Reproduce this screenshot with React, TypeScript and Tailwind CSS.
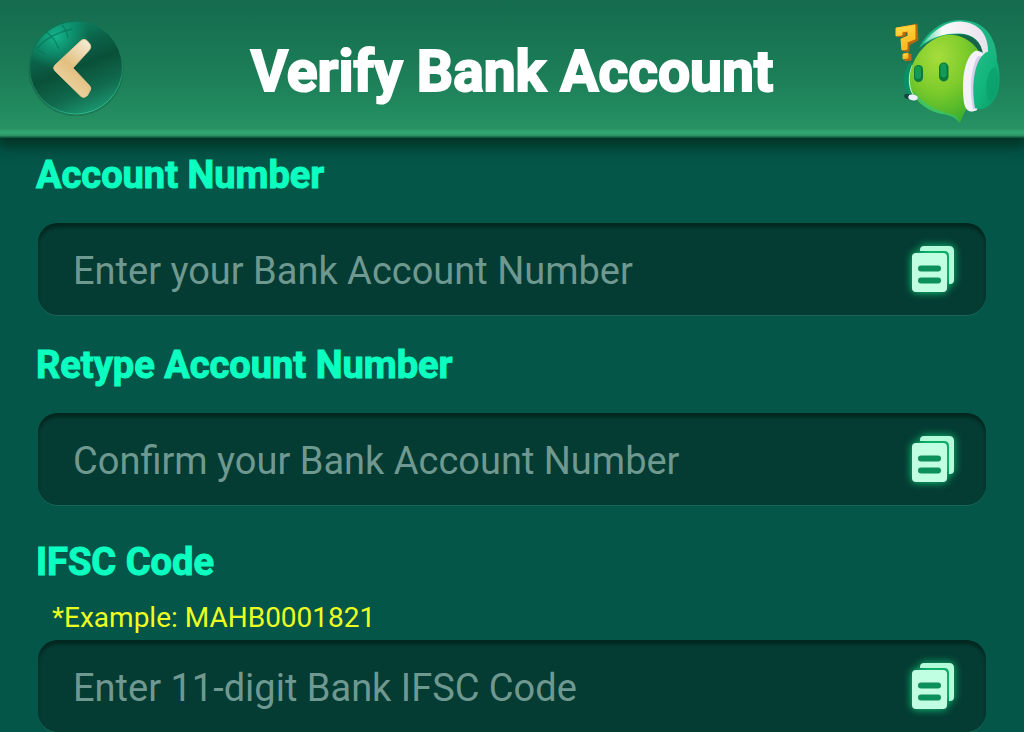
import React, { useState } from 'react';
import { clsx } from 'clsx';

interface BankFieldProps {
  id: string;
  label: string;
  placeholder: string;
  hint?: string;
  className?: string;
}

const BackIcon: React.FC = () => (
  <svg viewBox="0 0 96 96" className="size-24" aria-hidden="true">
    <defs>
      <linearGradient id="ball" x1="0.3" y1="0" x2="0.7" y2="1">
        <stop offset="0" stopColor="#0b8a68" />
        <stop offset="0.3" stopColor="#0b6248" />
        <stop offset="0.5" stopColor="#0a5039" />
        <stop offset="0.75" stopColor="#10694c" />
        <stop offset="1" stopColor="#1d9a72" />
      </linearGradient>
      <radialGradient id="glare" cx="0.28" cy="0.16" r="0.36">
        <stop offset="0" stopColor="#14b68d" />
        <stop offset="0.6" stopColor="#0f9a76" stopOpacity="0.6" />
        <stop offset="1" stopColor="#0f9a76" stopOpacity="0" />
      </radialGradient>
      <linearGradient id="rim" x1="0.3" y1="0" x2="0.7" y2="1">
        <stop offset="0" stopColor="#0f6f54" />
        <stop offset="0.6" stopColor="#1b7f5d" />
        <stop offset="1" stopColor="#2fbf92" />
      </linearGradient>
      <linearGradient id="gold" x1="0.8" y1="0" x2="0.3" y2="1">
        <stop offset="0" stopColor="#f3ead0" />
        <stop offset="0.5" stopColor="#e3bf80" />
        <stop offset="1" stopColor="#efdcb0" />
      </linearGradient>
    </defs>
    <ellipse cx="48" cy="49.500" rx="47.500" ry="46.500" fill="#0d4f38" opacity="0.35" />
    <circle cx="48" cy="47.500" r="46.500" fill="url(#ball)" stroke="url(#rim)" strokeWidth="1" />
    <circle cx="48" cy="47.500" r="45.500" fill="url(#glare)" />
    <g fill="none" stroke="#0a7459" strokeWidth="1.3" opacity="0.7">
      <path d="M9 28C16 20 26 13 44 9" />
      <path d="M18 12C24 16 28 21 31 29" />
      <path d="M34 5C37 8 39 12 40 18" />
      <path d="M7 28C11 30 14 32 18 35" />
    </g>
    <path
      d="M53 20.500Q56 18 59 20.500L62 24Q64 27 61.500 30L45 48L61.500 65.500Q64 68 62 71L59.500 75.500Q56 79 53 76.500L27 51Q24 48 27 45Z"
      fill="url(#gold)"
      stroke="#dfc28a"
      strokeWidth="0.8"
      strokeLinejoin="round"
    />
  </svg>
);

const SupportMascot: React.FC = () => (
  <svg viewBox="0 0 106 104" className="h-26 w-[106px]" aria-hidden="true">
    <defs>
      <radialGradient id="body" cx="0.4" cy="0.25" r="0.8">
        <stop offset="0" stopColor="#a6dd3c" />
        <stop offset="0.5" stopColor="#7ccb2b" />
        <stop offset="1" stopColor="#3aac2c" />
      </radialGradient>
      <linearGradient id="cup" x1="0" y1="0" x2="1" y2="1">
        <stop offset="0" stopColor="#25bd87" />
        <stop offset="0.5" stopColor="#12b57c" />
        <stop offset="1" stopColor="#0a9864" />
      </linearGradient>
      <linearGradient id="band" x1="0" y1="0" x2="1" y2="0">
        <stop offset="0" stopColor="#4fd5a5" />
        <stop offset="0.3" stopColor="#fafafa" />
        <stop offset="1" stopColor="#e9e0ec" />
      </linearGradient>
      <linearGradient id="mark" x1="0" y1="0" x2="0.4" y2="1">
        <stop offset="0" stopColor="#ffe04a" />
        <stop offset="1" stopColor="#ffb51c" />
      </linearGradient>
    </defs>
    {/* headband */}
    <path d="M25 28C34 10 49 0 66 0C88 0 102 14 103 39L96 44L90 35C88 21 78 14 65 14C53 14 38 17 25 28Z" fill="#1db583" />
    <path d="M60 16C74 12 86 20 90 34L84 32C80 24 72 19 60 16Z" fill="#14644a" />
    <path d="M29 24C42 7 55 1 67 1.500C85 3 96 14 94 38L89 35C88 22 79 14 66 13.500C52 13 41 16 29 24Z" fill="url(#band)" />
    {/* far ear cup and microphone */}
    <path d="M16 43C10 48 8 62 12 70C14 74 17 76 20 75L22 43Z" fill="#0a9163" />
    <path d="M18 45C13 56 14 69 20 77L26 76L23 45Z" fill="#d5f0e0" />
    {/* head */}
    <path
      d="M16 63C14 45 27 24 45 17C59 11 76 18 84 30C89 40 87 63 77 86C70 90 70 94 66 103C62 98 57 95 49 94C32 91 17 79 16 63Z"
      fill="url(#body)"
    />
    <path d="M19 70C28 84 43 91 62 96L66 103C62 98 57 95 49 94C35 92 23 83 19 70Z" fill="#2fc67d" opacity="0.7" />
    <rect x="20" y="45" width="9" height="17" rx="4.500" fill="#087a3d" />
    <rect x="21" y="46" width="6" height="13" rx="3" fill="#149b53" />
    <rect x="45" y="42.500" width="9.500" height="19" rx="4.700" fill="#087a3d" />
    <rect x="46.500" y="43.500" width="6" height="14" rx="3" fill="#149b53" />
    <ellipse cx="14" cy="76.500" rx="4" ry="2.500" fill="#174641" transform="rotate(12 14 76.500)" />
    <ellipse cx="19" cy="77.500" rx="4.800" ry="2.800" fill="#eef0fb" transform="rotate(10 19 77.500)" />
    {/* near ear cup */}
    <path d="M81 31C70 38 67 61 70 83C72 92 77 93 83 90L91 37C89 32 85 30 81 31Z" fill="#f5f1fb" />
    <path d="M84 36C77 46 75 69 79 89L84 89L92 37Z" fill="#d9cdec" />
    <path d="M90 34C80 42 77 67 81 88C91 92 101 84 104.500 70C107 57 105 42 100 35C97 31 93 31 90 34Z" fill="url(#cup)" />
    <path d="M100 47C92 53 90 70 95 81C102 77 105 66 104 56C103.500 51 102 48 100 47Z" fill="#0a9e6c" opacity="0.7" />
    {/* question mark */}
    <g strokeLinejoin="round">
      <path d="M4 8L23 4L24 20L15 25L15 31L10 31L9 20L16 17L16 12L11 13L11 16L4 17Z" fill="#b96810" stroke="#b96810" />
      <path d="M11 35L17 34L17 40L11 41Z" fill="#b96810" stroke="#b96810" />
      <path d="M2 8L21 5L21 19L13 22L13 29L8 30L7 19L14 16L14 11L8 12L8 15L2 16Z" fill="url(#mark)" stroke="#ffc62e" />
      <path d="M9 34L14 33L14 38L9 39Z" fill="url(#mark)" stroke="#ffb51c" />
    </g>
  </svg>
);

const PasteIcon: React.FC = () => (
  <svg viewBox="0 0 60 64" className="h-16 w-15 overflow-visible" aria-hidden="true">
    <g className="drop-shadow-[0_0_4px_#12d980]">
      <path d="M18 14V13Q18 9 22 9H47Q52 9 52 14V43Q52 47 48 47H47V19Q47 14 42 14Z" fill="#b3fbd9" />
      <rect x="10" y="16" width="35" height="39" rx="4" fill="#c0ffe2" />
    </g>
    <rect x="16" y="28.500" width="23" height="6" rx="3" fill="#0d8f5b" />
    <rect x="16" y="40.500" width="23" height="6" rx="3" fill="#0d8f5b" />
  </svg>
);

const BankField: React.FC<BankFieldProps> = ({ id, label, placeholder, hint, className }) => {
  const [value, setValue] = useState('');

  const handlePaste = async () => {
    try {
      setValue(await navigator.clipboard.readText());
    } catch (error) {
      console.error(error);
    }
  };

  return (
    <div className={className}>
      <label
        htmlFor={id}
        className={clsx(
          'block pl-9 text-[38px] leading-12 font-bold text-[#0cffc0] [-webkit-text-stroke:1px_#0cffc0]',
          hint ? 'mb-4' : 'mb-6'
        )}
      >
        {label}
      </label>
      {hint && (
        <p id={`${id}-hint`} className="mb-1.5 pl-[52px] text-[28px] leading-8 text-[#edff21]">
          {hint}
        </p>
      )}
      <div className="mx-[38px] flex h-[92px] items-center rounded-[20px] bg-[#043b32] pr-6 pl-[35px] shadow-[inset_0_4px_3px_#02271f,0_1px_0_#1a6555]">
        <input
          id={id}
          type="text"
          value={value}
          onChange={(e) => setValue(e.target.value)}
          placeholder={placeholder}
          aria-describedby={hint ? `${id}-hint` : undefined}
          className="h-full min-w-0 flex-1 bg-transparent pt-1 text-[38px] text-white outline-none placeholder:text-[#6f9990]"
        />
        <button type="button" onClick={handlePaste} aria-label={`Paste ${label}`} className="cursor-pointer">
          <PasteIcon />
        </button>
      </div>
    </div>
  );
};

const App: React.FC = () => {
  return (
    <div className="min-h-screen bg-[#035648] font-['Roboto',sans-serif]">
      <header className="grid h-[138px] grid-cols-[1fr_auto_1fr] items-start bg-[linear-gradient(to_bottom,#146b4e,#1d8059_60%,#269263_93%,#32a873_96%,#2c9868_98%,#0b4d36)] px-6 pt-5 shadow-[0_4px_14px_4px_#022f22]">
        <button type="button" aria-label="Back" className="ml-1 cursor-pointer justify-self-start">
          <BackIcon />
        </button>
        <h1 className="text-[57px] leading-[104px] font-bold whitespace-nowrap text-white [-webkit-text-stroke:2px_white]">
          Verify Bank Account
        </h1>
        <button type="button" aria-label="Customer support" className="cursor-pointer justify-self-end">
          <SupportMascot />
        </button>
      </header>

      <form className="pt-[13px]" onSubmit={(e) => e.preventDefault()}>
        <BankField id="account" label="Account Number" placeholder="Enter your Bank Account Number" />
        <BankField
          id="retype"
          label="Retype Account Number"
          placeholder="Confirm your Bank Account Number"
          className="mt-[26px]"
        />
        <BankField
          id="ifsc"
          label="IFSC Code"
          hint="*Example: MAHB0001821"
          placeholder="Enter 11-digit Bank IFSC Code"
          className="mt-[33px]"
        />
      </form>
    </div>
  );
};

export default App;
